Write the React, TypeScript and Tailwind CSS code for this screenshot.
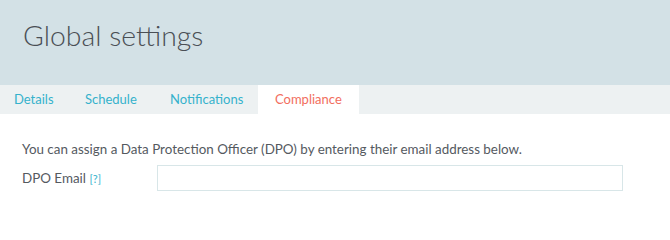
import { useState } from 'react';

const tabs = [
  { name: 'Details', w: 'w-[71px]' },
  { name: 'Schedule', w: 'w-[85px]' },
  { name: 'Notifications', w: 'w-[88px]' },
  { name: 'Compliance', w: 'w-[101px] pl-[17px]' },
];

export default function App() {
  const [active, setActive] = useState('Compliance');
  const [email, setEmail] = useState('');

  return (
    <div className="w-[670px] h-[230px] bg-white font-['Lato','Open_Sans',sans-serif]">
      <div className="h-[85px] bg-[#d3e1e6] pl-[23px] pt-[17px]">
        <h1 className="text-[28.4px] font-light text-[#4a4f55] leading-[36px]">Global settings</h1>
      </div>
      <div className="flex h-[29px] bg-[#edf1f2] pl-[14px]">
        {tabs.map((t) => (
          <button
            key={t.name}
            onClick={() => setActive(t.name)}
            className={
              t.w +
              ' text-left text-[13px] ' +
              (t.name === active ? 'bg-white text-[#f26e60]' : 'text-[#35b2cc]')
            }
          >
            {t.name}
          </button>
        ))}
      </div>
      <div className="px-[22px] pt-[26px] text-[13.4px] text-[#555a5f]">
        <p className="leading-[18px]">
          You can assign a Data Protection Officer (DPO) by entering their email address below.
        </p>
        <div className="flex items-center mt-[7px]">
          <label className="w-[135px]">
            DPO Email <span className="text-[11px] text-[#35b2cc]">[?]</span>
          </label>
          <input
            value={email}
            onChange={(e) => setEmail(e.target.value)}
            className="w-[466px] h-[26px] border border-[#d8e6e8] px-2 outline-none"
          />
        </div>
      </div>
    </div>
  );
}
